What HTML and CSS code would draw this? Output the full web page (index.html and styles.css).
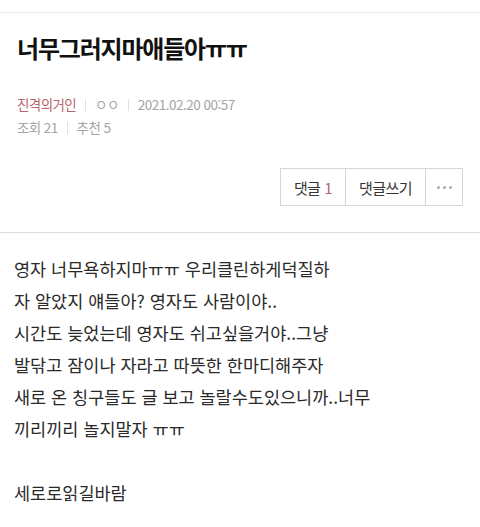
FILE: index.html
```html
<!DOCTYPE html>
<html lang="ko">
  <head>
    <meta charset="UTF-8" />
    <meta name="viewport" content="width=device-width, initial-scale=1.0" />
    <title>너무그러지마애들아ㅠㅠ</title>
    <link rel="stylesheet" href="styles.css">
  </head>
  <body>
    <div class="top-line"></div>
    <div class="post-header">
      <h1 class="post-title">너무그러지마애들아ㅠㅠ</h1>
      <div class="post-meta meta-first">
        <span class="author">진격의거인</span>
        <span class="sep"></span>
        <span>ㅇㅇ</span>
        <span class="sep"></span>
        <span class="date">2021.02.20 00:57</span>
      </div>
      <div class="post-meta">
        <span>조회 21</span>
        <span class="sep"></span>
        <span>추천 5</span>
      </div>
      <div class="post-actions">
        <div class="btn-group">
          <a class="btn btn-comment">댓글 <em>1</em></a>
          <a class="btn btn-write">댓글쓰기</a>
          <a class="btn btn-more"><span class="dot"></span><span class="dot"></span><span class="dot"></span></a>
        </div>
      </div>
    </div>
    <div class="post-body">
      영자 너무욕하지마ㅠㅠ 우리클린하게덕질하<br>
      자 알았지 얘들아? 영자도 사람이야..<br>
      시간도 늦었는데 영자도 쉬고싶을거야..그냥<br>
      발닦고 잠이나 자라고 따뜻한 한마디해주자<br>
      새로 온 칭구들도 글 보고 놀랄수도있으니까..너무<br>
      끼리끼리 놀지말자 ㅠㅠ<br>
      <br>
      세로로읽길바람
    </div>
  </body>
</html>
```

FILE: styles.css
```css
body {
  margin: 0;
  padding: 0;
  background: #fff;
  color: #222;
  font-family: "Noto Sans CJK KR", "Noto Sans", sans-serif;
}
.top-line {
  height: 12px;
  border-bottom: 1px solid #e8e8e8;
}
.post-header {
  padding: 0 17px;
  border-bottom: 1px solid #dcdcdc;
}
.post-title {
  margin: 0;
  padding-top: 20px;
  font-size: 24px;
  line-height: 30px;
  font-weight: 700;
  letter-spacing: -1.2px;
  color: #111;
}
.post-meta {
  display: flex;
  align-items: center;
  font-size: 13.5px;
  line-height: 23px;
  letter-spacing: -0.6px;
  color: #a4a4a4;
}
.meta-first {
  margin-top: 30px;
}
.post-meta .author {
  color: #b8646b;
}
.post-meta .date {
  letter-spacing: -0.5px;
}
.post-meta .sep {
  width: 1px;
  height: 12px;
  margin: 0 9px;
  background: #e2e2e2;
}
.post-actions {
  display: flex;
  justify-content: flex-end;
  padding: 29px 0 26px;
}
.btn-group {
  display: flex;
  border: 1px solid #d6d6d6;
}
.btn {
  display: flex;
  align-items: center;
  justify-content: center;
  height: 36px;
  font-size: 15px;
  letter-spacing: -0.6px;
  color: #333;
}
.btn + .btn {
  border-left: 1px solid #d6d6d6;
}
.btn-comment {
  width: 64px;
}
.btn-comment em {
  font-style: normal;
  color: #b8646b;
  margin-left: 4px;
}
.btn-write {
  width: 79px;
}
.btn-more {
  width: 36px;
  gap: 3px;
}
.dot {
  width: 3px;
  height: 3px;
  border-radius: 50%;
  background: #aaa;
}
.post-body {
  padding: 20px 14px;
  font-size: 17.5px;
  line-height: 32px;
  color: #2a2a2a;
}
```
